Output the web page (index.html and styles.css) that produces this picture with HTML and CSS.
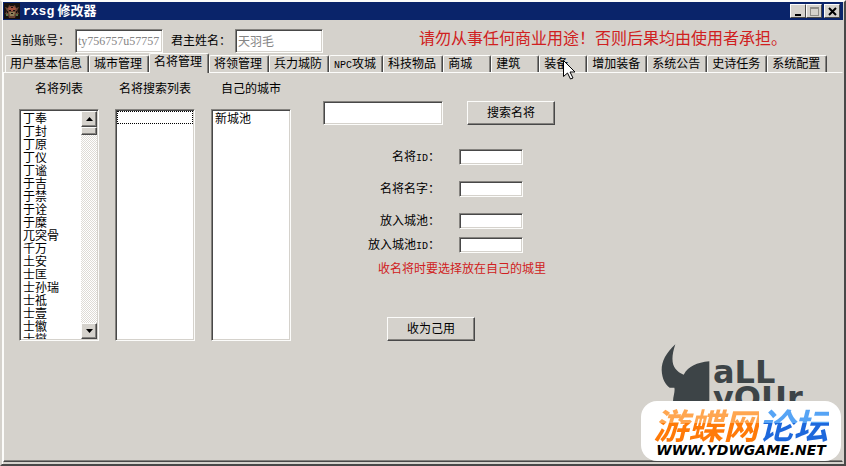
FILE: index.html
```html
<!DOCTYPE html>
<html lang="zh-CN">
<head>
<meta charset="utf-8">
<title>rxsg 修改器</title>
<link rel="stylesheet" href="styles.css">
</head>
<body>
<div class="window">
  <header class="titlebar">
    <svg class="app-icon" viewBox="0 0 16 16" aria-hidden="true">
      <rect width="16" height="16" fill="#17110f"/>
      <path d="M1 4l3 1 1-3 3 2 3-2 1 3 3-1-2 4 2 3-3 1-1 3H5l-1-3-3-1 2-3z" fill="#6b4634"/>
      <path d="M4 5l4-2 4 2-1 3H5z" fill="#a4523f"/>
      <path d="M5 9h6l-1 4H6z" fill="#8f8058"/>
      <path d="M5 7h2v1H5zM9 7h2v1H9zM7 10h2v1H7zM3 8h1v2H3zM12 8h1v2h-1zM7 4h2v1H7z" fill="#17110f"/>
      <path d="M2 11h2v2H2zM12 11h2v2h-2z" fill="#56754c"/>
    </svg>
    <h1 class="title"><span class="title-latin">rxsg</span> 修改器</h1>
    <div class="window-buttons">
      <button class="window-button" aria-label="最小化"><svg viewBox="0 0 11 9"><path d="M2 7h6v2H2z"/></svg></button>
      <button class="window-button" aria-label="最大化" disabled><svg viewBox="0 0 11 9"><path d="M1 0h9v9H1zM2 2v6h7V2z" fill="#8f8d88" fill-rule="evenodd"/></svg></button>
      <button class="window-button close" aria-label="关闭"><svg viewBox="0 0 11 9"><path d="M2 1l7 7M9 1L2 8" stroke="#000" stroke-width="2"/></svg></button>
    </div>
  </header>

  <div class="account">
    <label for="account">当前账号：</label>
    <input class="field account-field" id="account" value="ty756757u57757" disabled>
    <label class="lord" for="lord">君主姓名：</label>
    <input class="field account-field" id="lord" value="天羽毛" disabled>
    <p class="warning">请勿从事任何商业用途！否则后果均由使用者承担。</p>
  </div>

  <nav class="tabs" role="tablist">
    <button class="tab" role="tab">用户基本信息</button>
    <button class="tab" role="tab">城市管理</button>
    <button class="tab active" role="tab" aria-selected="true">名将管理</button>
    <button class="tab" role="tab">将领管理</button>
    <button class="tab" role="tab">兵力城防</button>
    <button class="tab" role="tab"><span class="latin">NPC</span>攻城</button>
    <button class="tab" role="tab">科技物品</button>
    <button class="tab" role="tab">商城</button>
    <button class="tab" role="tab">建筑</button>
    <button class="tab pointed" role="tab">装备<svg class="cursor" viewBox="0 0 12 20" aria-hidden="true"><path d="M.5.5v16l4-3.500 3 6 2.500-1-3-6h5z" fill="#fff" stroke="#000"/></svg></button>
    <button class="tab" role="tab">增加装备</button>
    <button class="tab" role="tab">系统公告</button>
    <button class="tab" role="tab">史诗任务</button>
    <button class="tab" role="tab">系统配置</button>
  </nav>

  <main class="panel">
    <section class="lists">
      <div class="list-column">
        <label for="heroes">名将列表</label>
        <div class="listbox">
          <select id="heroes" size="18">
            <option>丁奉</option><option>丁封</option><option>丁原</option><option>丁仪</option><option>丁谧</option><option>于吉</option><option>于禁</option><option>于诠</option><option>于糜</option><option>兀突骨</option><option>千万</option><option>土安</option><option>士匡</option><option>士孙瑞</option><option>士祗</option><option>士壹</option><option>士徽</option><option>士燮</option>
          </select>
          <div class="scrollbar">
            <button class="scroll-button" aria-label="向上"><svg viewBox="0 0 7 4"><path d="M0 4h7L3.500 0z"/></svg></button>
            <div class="thumb"></div>
            <button class="scroll-button down" aria-label="向下"><svg viewBox="0 0 7 4"><path d="M0 0h7L3.500 4z"/></svg></button>
          </div>
        </div>
      </div>
      <div class="list-column">
        <label for="results">名将搜索列表</label>
        <div class="listbox">
          <select id="results" size="17"><option class="focused" aria-label="空"></option></select>
        </div>
      </div>
      <div class="list-column">
        <label for="cities">自己的城市</label>
        <div class="listbox">
          <select id="cities" size="17"><option>新城池</option></select>
        </div>
      </div>
    </section>

    <section class="editor">
      <div class="search">
        <input class="field search-field" aria-label="搜索名将">
        <button class="button">搜索名将</button>
      </div>
      <div class="form-row"><label for="hero-id">名将<span class="latin">ID</span>：</label><input class="field" id="hero-id"></div>
      <div class="form-row"><label for="hero-name">名将名字：</label><input class="field" id="hero-name"></div>
      <div class="form-row"><label for="city">放入城池：</label><input class="field" id="city"></div>
      <div class="form-row tight"><label for="city-id">放入城池<span class="latin">ID</span>：</label><input class="field" id="city-id"></div>
      <p class="note">收名将时要选择放在自己的城里</p>
      <button class="button take">收为己用</button>
    </section>
  </main>

  <aside class="brand">
    <div class="logo">
      <svg class="helmet" viewBox="105 28 147 174" aria-hidden="true"><path d="M148 29C120 55 107 80 107 106c1 28 12 44 24 53h14c3 12-4 26-4 43h109V80c-38 4-62 14-77 40C143 108 129 85 148 29z" fill="#3d4447"/></svg>
      <div class="logo-text"><span>aLL</span><span>yOUr</span></div>
    </div>
    <div class="badge">
      <div class="forum"><span class="orange">游蝶网</span><span class="blue">论坛</span></div>
      <div class="site">WWW.YDWGAME.NET</div>
    </div>
  </aside>
</div>
</body>
</html>
```
FILE: styles.css
```css
* {
  box-sizing: border-box;
}

:root {
  --face: #d5d2cc;
  --light: #fcfcfa;
  --shade: #85837f;
  --dark: #484848;
}

body {
  margin: 0;
  background: var(--face);
}

body, button, input, select {
  font-family: "Liberation Serif", "Noto Sans CJK SC", sans-serif;
  font-size: 12px;
  line-height: 16px;
  color: #000;
}

button {
  background: var(--face);
  border: 1px solid;
  border-color: var(--light) var(--dark) var(--dark) var(--light);
  padding: 0;
}

h1, p {
  margin: 0;
}

.window {
  position: relative;
  display: flex;
  flex-direction: column;
  min-height: 100vh;
  padding: 0 1px 2px 0;
  border: 2px solid;
  border-color: var(--light) var(--dark) var(--dark) var(--face);
  box-shadow: inset 1px 0 var(--light);
}

.titlebar {
  display: flex;
  align-items: center;
  height: 18px;
  margin-left: 1px;
  padding: 0 3px 0 1px;
  background: #0a246a;
}

.app-icon {
  width: 16px;
  height: 16px;
}

.title {
  flex: 1;
  margin-left: 3px;
  color: #fff;
  font-size: 13px;
  line-height: 18px;
  white-space: pre;
}

.title-latin {
  font-family: "Liberation Mono", monospace;
}

.window-buttons {
  display: flex;
}

.window-button {
  display: grid;
  place-items: center;
  width: 16px;
  height: 14px;
}

.window-button svg {
  width: 11px;
  height: 9px;
}

.close {
  margin-left: 2px;
}

.field {
  width: 64px;
  height: 16px;
  padding: 0 2px;
  border: 1px solid;
  border-color: var(--shade) var(--light) var(--light) var(--shade);
  border-radius: 0;
  background: #fff;
  box-shadow: inset 1px 1px var(--dark), inset -1px -1px var(--face);
}

.account {
  display: flex;
  align-items: center;
  height: 33px;
  padding: 9px 0 0 8px;
}

.account label {
  margin-right: 5px;
}

.account .lord {
  margin: 0 4px 0 8px;
}

.account-field {
  width: 88px;
  height: 24px;
  color: #858585;
}

.warning {
  margin-left: 96px;
  padding-bottom: 4px;
  color: #d02020;
  font-size: 16px;
  line-height: 20px;
  white-space: nowrap;
}

.latin {
  font-family: "Liberation Mono", monospace;
  font-size: 10px;
}

.tabs {
  display: flex;
  align-items: flex-end;
  height: 19px;
  padding-left: 3px;
}

.tab {
  height: 17px;
  min-width: 48px;
  padding: 0 6px 0 4px;
  border-width: 1px 1px 0 1px;
  border-radius: 2px 2px 0 0;
  box-shadow: inset -1px 0 var(--shade);
  text-align: left;
  white-space: nowrap;
}

.active {
  position: relative;
  height: 20px;
  margin-bottom: -1px;
  padding-bottom: 3px;
}

.pointed {
  position: relative;
}

.cursor {
  position: absolute;
  z-index: 1;
  left: 23px;
  top: 4px;
  width: 12px;
  height: 20px;
}

.panel {
  flex: 1;
  display: flex;
  align-items: flex-start;
  gap: 32px;
  margin-left: 1px;
  padding: 8px 0 0 15px;
  border: 1px solid;
  border-color: var(--light) var(--face) var(--dark) var(--light);
  box-shadow: inset 0 -1px var(--shade);
}

.lists {
  display: flex;
  gap: 16px;
}

.list-column {
  display: flex;
  flex-direction: column;
  align-items: center;
  gap: 12px;
}

.listbox {
  display: flex;
  width: 80px;
  height: 232px;
  padding: 1px;
  border: 1px solid;
  border-color: var(--shade) var(--light) var(--light) var(--shade);
  background: #fff;
  box-shadow: inset 1px 1px var(--dark), inset -1px -1px var(--face);
  overflow: hidden;
}

select {
  flex: 1;
  min-width: 0;
  height: 228px;
  padding: 0;
  border: 0;
  border-radius: 0;
  outline: 0;
  appearance: none;
  background: #fff;
  overflow: hidden;
}

option {
  display: flex;
  align-items: center;
  height: 13px;
  min-height: 0;
  padding: 0 2px;
  line-height: 13px;
}

.focused {
  border: 1px dotted #000;
}

.scrollbar {
  display: flex;
  flex-direction: column;
  width: 16px;
  background: repeating-conic-gradient(#fff 0 25%, #dedbd5 0 50%) 0 0 / 2px 2px;
}

.scroll-button, .thumb {
  display: grid;
  place-items: center;
  height: 16px;
  background: var(--face);
  border: 1px solid;
  border-color: var(--light) var(--dark) var(--dark) var(--light);
  box-shadow: inset -1px -1px var(--shade);
}

.scroll-button svg {
  width: 7px;
  height: 4px;
}

.thumb {
  height: 8px;
}

.down {
  margin-top: auto;
}

.editor {
  display: flex;
  flex-direction: column;
  align-items: flex-start;
  padding-top: 20px;
}

.search {
  display: flex;
  gap: 24px;
  margin-bottom: 8px;
}

.search-field {
  width: 120px;
  height: 24px;
}

.button {
  width: 88px;
  height: 24px;
  box-shadow: inset -1px -1px var(--shade);
}

.form-row {
  display: flex;
  gap: 19px;
  height: 16px;
  margin-top: 16px;
}

.form-row label {
  width: 117px;
  text-align: right;
}

.tight {
  margin-top: 8px;
}

.note {
  margin: 8px 0 0 55px;
  color: #d02020;
}

.take {
  margin: 40px 0 0 64px;
}

.brand {
  position: absolute;
  right: 3px;
  bottom: 3px;
  width: 200px;
}

.logo {
  display: flex;
  gap: 3px;
  height: 57px;
  padding-left: 20px;
  overflow: hidden;
}

.helmet {
  width: 49px;
  height: 58px;
}

.logo-text {
  display: flex;
  flex-direction: column;
  padding-top: 15px;
  color: #3d4447;
  font-family: "DejaVu Sans", sans-serif;
  font-size: 32px;
  font-weight: 700;
  line-height: 26px;
}

.badge {
  height: 60px;
  padding-top: 4px;
  border-radius: 16px;
  background: #fff;
  text-align: center;
}

.forum {
  font-family: "Noto Sans CJK SC", sans-serif;
  font-size: 35px;
  font-style: italic;
  font-weight: 700;
  line-height: 38px;
}

.orange, .blue {
  background: linear-gradient(#ffa650 50%, #ff7a08 50%);
  background-clip: text;
  color: transparent;
}

.blue {
  background-image: linear-gradient(#56a4f5 50%, #1d68dc 50%);
}

.site {
  font-family: "DejaVu Sans", sans-serif;
  font-size: 14px;
  font-style: italic;
  font-weight: 700;
  line-height: 14px;
}
```
